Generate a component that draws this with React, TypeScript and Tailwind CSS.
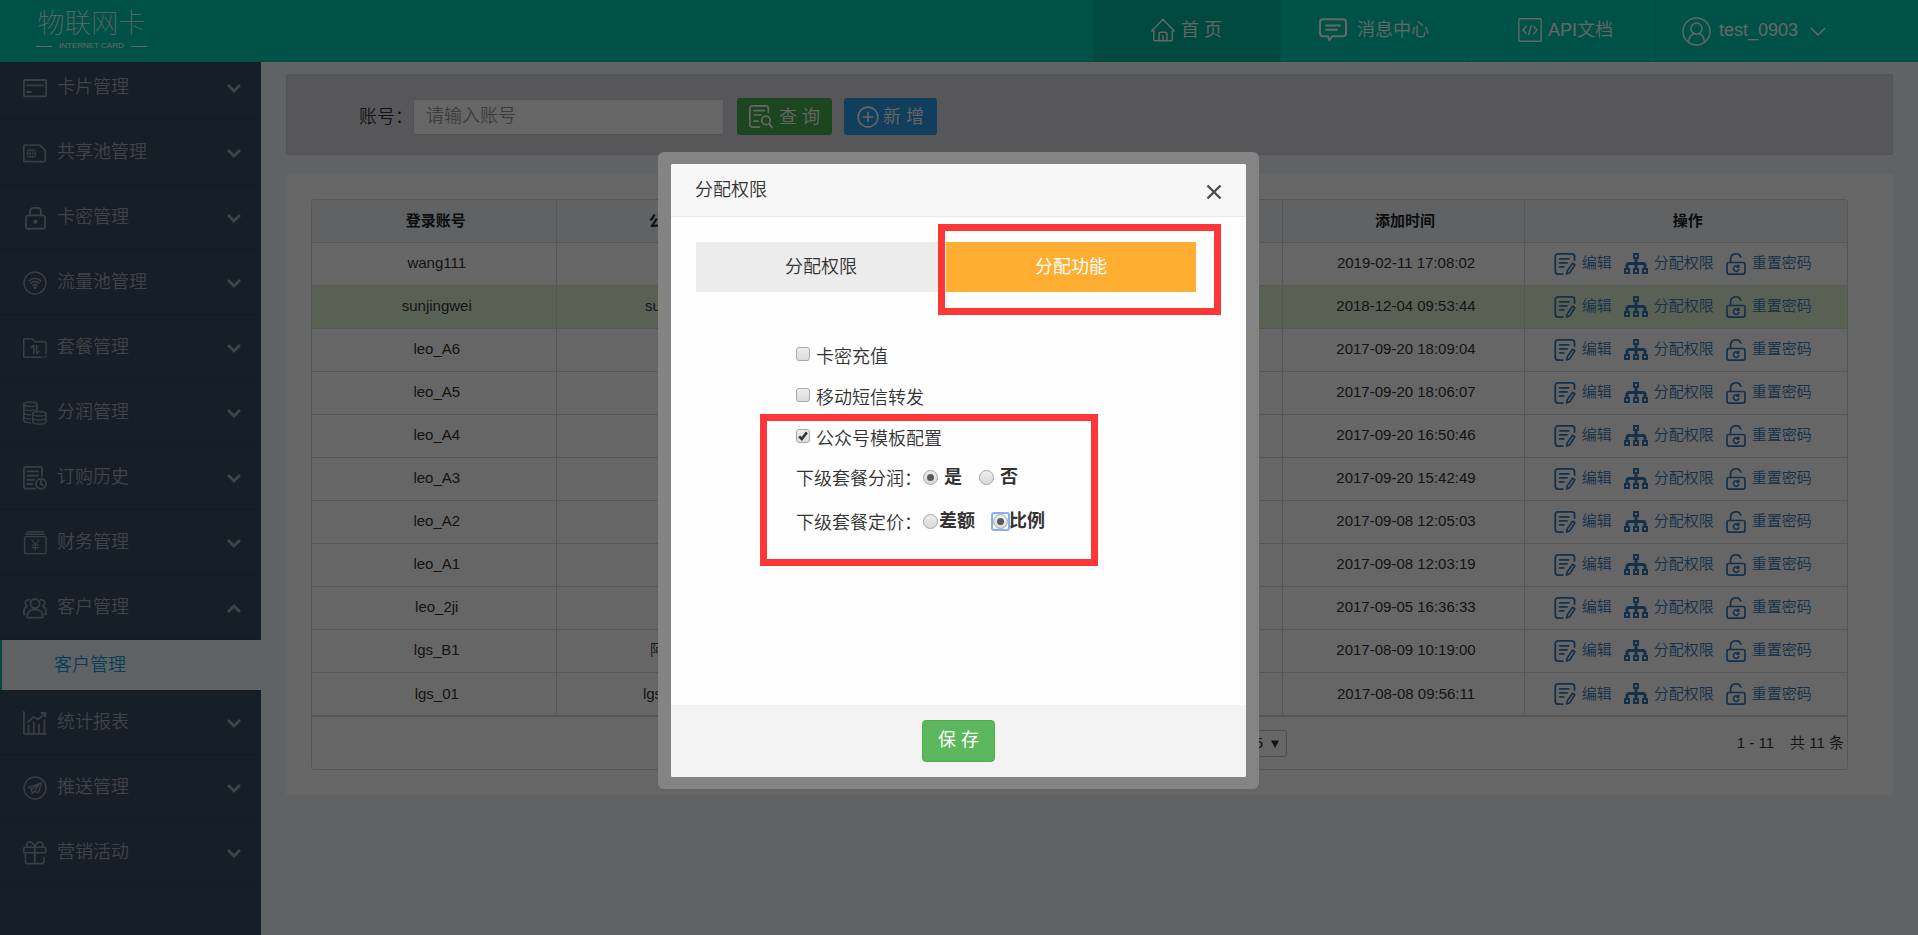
import React, { useState } from "react";

type IconProps = { className?: string };

function Svg({ className, children, width = 1.5 }: { className?: string; children: React.ReactNode; width?: number }) {
  return (
    <svg
      viewBox="0 0 24 24"
      fill="none"
      stroke="currentColor"
      strokeWidth={width}
      strokeLinecap="round"
      strokeLinejoin="round"
      className={className}
      aria-hidden="true"
    >
      {children}
    </svg>
  );
}

const CardIcon = ({ className }: IconProps) => (
  <Svg className={className} width={1.8}>
    <rect x="0.9" y="4" width="22.2" height="16.4" rx="1" />
    <path d="M4 9.4h16M4 16h4" />
  </Svg>
);

const SimIcon = ({ className }: IconProps) => (
  <Svg className={className} width={1.7}>
    <path d="M1.8 4h15l5.4 5.4v10.2a1 1 0 0 1-1 1H1.8a1 1 0 0 1-1-1V5a1 1 0 0 1 1-1Z" />
    <rect x="4.4" y="9" width="8" height="7" rx="1" strokeWidth="1" />
    <path d="M7.2 9v7M9.8 9v7M4.4 12.5h2.8M9.8 12.5h2.6" strokeWidth="1" />
  </Svg>
);

const LockIcon = ({ className }: IconProps) => (
  <Svg className={className} width={1.9}>
    <rect x="3" y="9.4" width="19" height="13.4" rx="2.4" />
    <path d="M7 9.2V5.4A3.4 3.4 0 0 1 10.4 2h4.2A3.4 3.4 0 0 1 18 5.400v3.8" />
    <circle cx="12.5" cy="15.8" r="1.2" fill="currentColor" />
  </Svg>
);

const WifiIcon = ({ className }: IconProps) => (
  <Svg className={className} width={1.4}>
    <circle cx="12" cy="12" r="11" />
    <path d="M6.3 9.8c3.400-3 8-3 11.400 0M8.100 12.200c2.400-2 5.400-2 7.800 0M9.900 14.400c1.400-1 2.800-1 4.200 0" strokeWidth="1.6" />
    <circle cx="12" cy="16.6" r="0.9" fill="currentColor" />
  </Svg>
);

const FolderIcon = ({ className }: IconProps) => (
  <Svg className={className} width={1.5}>
    <path d="M18.5 21.3H1.700a1 1 0 0 1-1-1V3.800a1 1 0 0 1 1-1h7.400l3 3h10a1 1 0 0 1 1 1v10.400" />
    <path d="M8.200 11.600l2.600-2.200v8M13.600 9.400v8l2.600-2.200" />
    <path d="M20.600 21.300h.6M23 20v.6" />
  </Svg>
);

const CoinsIcon = ({ className }: IconProps) => (
  <Svg className={className} width={1.5}>
    <ellipse cx="7.4" cy="3.2" rx="6.6" ry="2.3" />
    <path d="M.8 3.200v16.400c0 1.200 3 2.200 6.600 2.200M14 3.200v6.600M.8 7.300c0 1.300 3 2.300 6.600 2.300s6.600-1 6.600-2.300M.8 11.400c0 1.300 3 2.300 6.600 2.300M.8 15.500c0 1.300 3 2.300 6.600 2.300" />
    <ellipse cx="16.3" cy="12.8" rx="6.6" ry="2.3" />
    <path d="M9.700 12.800v8c0 1.300 3 2.300 6.600 2.300s6.600-1 6.600-2.300v-8M9.700 16.800c0 1.300 3 2.300 6.600 2.300s6.600-1 6.600-2.300" />
  </Svg>
);

const HistoryIcon = ({ className }: IconProps) => (
  <Svg className={className} width={1.8}>
    <path d="M12 22.600H2.900a2 2 0 0 1-2-2V2.900a2 2 0 0 1 2-2h14a2 2 0 0 1 2 2v7.400" />
    <path d="M4.400 5.400h10.800M4.400 9.600h10.800M4.400 13.800h6.600M4.400 18h4.800" />
    <circle cx="18" cy="17.8" r="5" />
    <path d="M17.800 15v3l2 1.200" />
  </Svg>
);

const FinanceIcon = ({ className }: IconProps) => (
  <Svg className={className} width={1.4}>
    <rect x="1.6" y="5.6" width="21.4" height="17" rx="1" />
    <path d="M2.800 3.200h19M4.200.8h16.200" />
    <path d="M9 9.200l3.400 4.200 3.400-4.200M12.400 13.400v6.200M9.200 14h6.400M9.200 16.600h6.400" strokeWidth="1.1" />
  </Svg>
);

const UsersIcon = ({ className }: IconProps) => (
  <Svg className={className} width={1.8}>
    <circle cx="12" cy="7.6" r="4.6" />
    <path d="M4.200 21.400c-.6-4.400 2.400-8 7.800-8s8.400 3.600 7.800 8c0 .4-15.600.4-15.600 0Z" />
    <path d="M6.200 3.600C3.400 3.400 2 5.600 2.600 8c.3 1 .8 1.600 1.400 2.200C1.400 11.600.6 14.600.9 18.200h1M17.800 3.600c2.800-.2 4.200 2 3.600 4.400-.3 1-.8 1.600-1.400 2.200 2.600 1.400 3.400 4.400 3.100 8h-1" />
  </Svg>
);

const ChartIcon = ({ className }: IconProps) => (
  <Svg className={className} width={1.8}>
    <path d="M.9.9v21.900h22.200M5.600 22v-7.600M10.800 22V11.400M16 22v-8.600M21.400 22V9.400" />
    <path d="M5 11.200l5.200-5.400 5 2.600 7-6M18.600 2h3.800v3.400" />
  </Svg>
);

const PlaneIcon = ({ className }: IconProps) => (
  <Svg className={className} width={1.4}>
    <circle cx="12" cy="12" r="11" />
    <path d="M18.500 6.800L5.500 11.400l3 1.800.8 4.400 2.200-2.400 3.800 1.600 3.200-10ZM8.500 13.200l7.200-4.400-4.200 6.400" />
  </Svg>
);

const GiftIcon = ({ className }: IconProps) => (
  <Svg className={className} width={1.6}>
    <rect x="0.8" y="6.2" width="22" height="5.6" rx="1.4" />
    <path d="M2.400 12v8.600a2 2 0 0 0 2 2H19a2 2 0 0 0 2-2v-4M11.800 6.200v16.200M11.800 6C10.200 2 7.800.6 5.800 1S3.200 4 4 6M11.800 6c1.600-4 4-5.400 6-5s2.600 3 1.800 5" />
  </Svg>
);

const HomeIcon = ({ className }: IconProps) => (
  <Svg className={className} width={1.4}>
    <path d="M2.800 13H.8L12 1.200 23.200 13h-2v8.800a1 1 0 0 1-1 1H3.800a1 1 0 0 1-1-1V13Z" />
    <path d="M8 22.600v-6.400a2 2 0 0 1 2-2h4a2 2 0 0 1 2 2v6.400M12 18v4.600" />
  </Svg>
);

const MessageIcon = ({ className }: IconProps) => (
  <svg viewBox="0 0 28 24" fill="none" stroke="currentColor" strokeWidth="2" strokeLinecap="round" strokeLinejoin="round" className={className} aria-hidden="true">
    <path d="M4 1.200h20a3 3 0 0 1 3 3v11a3 3 0 0 1-3 3H13l-2.600 4-1.600-4H4a3 3 0 0 1-3-3v-11a3 3 0 0 1 3-3Z" />
    <path d="M7 7.400h14M7 11.800h11" />
  </svg>
);

const ApiIcon = ({ className }: IconProps) => (
  <Svg className={className} width={1.4}>
    <rect x="0.8" y="0.8" width="22.4" height="22.4" rx="1" />
    <path d="M8.200 8.400L5 12l3.200 3.600M15.800 8.400L19 12l-3.200 3.600M13.200 7.600l-2.400 8.800" />
  </Svg>
);

const AvatarIcon = ({ className }: IconProps) => (
  <Svg className={className} width={1.2}>
    <circle cx="12" cy="12" r="11.2" />
    <circle cx="12" cy="9.6" r="4.6" />
    <path d="M5.400 20.600c.4-4 2.600-6.400 4.600-7M18.600 20.600c-.4-4-2.600-6.400-4.600-7" />
  </Svg>
);

const QueryIcon = ({ className }: IconProps) => (
  <Svg className={className} width={1.7}>
    <path d="M10.400 22.200H3.200a2.400 2.400 0 0 1-2.400-2.400V3.200A2.400 2.400 0 0 1 3.200.8H17a2.400 2.400 0 0 1 2.400 2.400v4" />
    <path d="M5 5.600h10.400M5 10h7M5 16.200h4" />
    <circle cx="17" cy="15.4" r="4.2" />
    <path d="M20 18.600l3.200 4" />
  </Svg>
);

const PlusIcon = ({ className }: IconProps) => (
  <Svg className={className} width={1.7}>
    <circle cx="12" cy="12" r="10.8" />
    <path d="M12 7v10M7 12h10" />
  </Svg>
);

const EditIcon = ({ className }: IconProps) => (
  <Svg className={className} width={2}>
    <path d="M9.600 23H4.400a3 3 0 0 1-3-3V4a3 3 0 0 1 3-3h15a3 3 0 0 1 3 3v3.600" />
    <path d="M6.200 6.400h10M6.200 10.800h8M6.200 15.200h4.400" />
    <path d="M20.200 11.200l2.600 1.600-5.600 8.800-3.400 1.400.6-3.400 5.800-8.400Z" strokeWidth="1.8" />
  </Svg>
);

const TreeIcon = ({ className }: IconProps) => (
  <svg viewBox="0 0 24 21" fill="none" stroke="currentColor" strokeWidth="2" className={className} aria-hidden="true">
    <rect x="10" y="1" width="4" height="4" />
    <rect x="1" y="16" width="4" height="4" />
    <rect x="10" y="16" width="4" height="4" />
    <rect x="19" y="16" width="4" height="4" />
    <path d="M12 5v11M3 16v-3.500a2 2 0 0 1 2-2h14a2 2 0 0 1 2 2V16" strokeWidth="3" />
  </svg>
);

const UnlockIcon = ({ className }: IconProps) => (
  <svg viewBox="0 0 20 22" fill="none" stroke="currentColor" strokeWidth="1.7" strokeLinecap="round" strokeLinejoin="round" className={className} aria-hidden="true">
    <rect x="1" y="9.5" width="18" height="11.6" rx="2" />
    <path d="M4.600 9.300V6.200a5.300 5.300 0 0 1 10.200-2.200" />
    <path d="M12.400 13.800a2.800 2.800 0 1 0 .4 2.800M12.800 12.400v1.800H11" strokeWidth="1.6" />
  </svg>
);

const Chevron = ({ up = false }: { up?: boolean }) => (
  <svg viewBox="0 0 14 9" fill="none" stroke="currentColor" strokeWidth="2.8" className="h-[9px] w-[14px]" aria-hidden="true">
    <path d={up ? "M1 8l6-6 6 6" : "M1 1l6 6 6-6"} />
  </svg>
);

const menu = [
  { label: "卡片管理", Icon: CardIcon },
  { label: "共享池管理", Icon: SimIcon },
  { label: "卡密管理", Icon: LockIcon },
  { label: "流量池管理", Icon: WifiIcon },
  { label: "套餐管理", Icon: FolderIcon },
  { label: "分润管理", Icon: CoinsIcon },
  { label: "订购历史", Icon: HistoryIcon },
  { label: "财务管理", Icon: FinanceIcon },
  { label: "客户管理", Icon: UsersIcon, children: ["客户管理"] },
  { label: "统计报表", Icon: ChartIcon },
  { label: "推送管理", Icon: PlaneIcon },
  { label: "营销活动", Icon: GiftIcon },
];

const rows = [
  { account: "wang111", company: "", time: "2019-02-11 17:08:02" },
  { account: "sunjingwei", company: "sunjingwei", time: "2018-12-04 09:53:44" },
  { account: "leo_A6", company: "", time: "2017-09-20 18:09:04" },
  { account: "leo_A5", company: "", time: "2017-09-20 18:06:07" },
  { account: "leo_A4", company: "", time: "2017-09-20 16:50:46" },
  { account: "leo_A3", company: "", time: "2017-09-20 15:42:49" },
  { account: "leo_A2", company: "", time: "2017-09-08 12:05:03" },
  { account: "leo_A1", company: "", time: "2017-09-08 12:03:19" },
  { account: "leo_2ji", company: "", time: "2017-09-05 16:36:33" },
  { account: "lgs_B1", company: "阿里公司", time: "2017-08-09 10:19:00" },
  { account: "lgs_01", company: "lgs_01公司", time: "2017-08-08 09:56:11" },
];

function Header() {
  return (
    <header className="flex h-[62px] shrink-0 bg-[#00cdae] text-lg text-white">
      <div className="flex flex-1 flex-col items-start pl-9 pt-2">
        <div className="flex flex-col items-center">
          <span className="text-[27px] leading-8 font-thin">物联网卡</span>
          <span className="flex items-center gap-[7px] text-[8px] leading-3">
            <span className="h-px w-4 bg-white" />
            INTERNET CARD
            <span className="h-px w-4 bg-white" />
          </span>
        </div>
      </div>
      <nav className="flex">
        <a href="#home" className="flex w-[187px] items-center justify-center gap-1.5 bg-[#00b79c] pb-0.5">
          <HomeIcon className="size-6" />
          首 页
        </a>
        <a href="#message" className="flex w-[187px] items-center justify-center gap-2.5 border-l border-[#00c3a5] pb-0.5">
          <MessageIcon className="h-6 w-7" />
          消息中心
        </a>
        <a href="#api" className="flex w-[188px] items-center justify-center gap-1.5 border-l border-[#00c3a5] pb-0.5 pl-2">
          <ApiIcon className="size-6" />
          API文档
        </a>
        <button type="button" className="flex w-[263px] items-center border-l border-[#00c3a5] pl-[26px]">
          <AvatarIcon className="size-[29px]" />
          <span className="ml-2 pb-0.5">test_0903</span>
          <svg viewBox="0 0 16 9" fill="none" stroke="currentColor" strokeWidth="1.5" className="ml-3 h-[9px] w-4" aria-hidden="true">
            <path d="M1 1l7 7 7-7" />
          </svg>
        </button>
      </nav>
    </header>
  );
}

function Sidebar() {
  return (
    <aside className="w-[261px] shrink-0 overflow-hidden bg-[#374b61] text-lg text-[#a0a8b2]">
      <ul className="-mt-[7px]">
        {menu.map(({ label, Icon, children }) => (
          <li key={label}>
            <button type="button" className="flex h-[65px] w-full items-center border-b border-[#32455a] pl-[23px] pr-5">
              <Icon className="mt-0.5 size-6 text-[#8f9baa]" />
              <span className="ml-2.5 flex-1 text-left">{label}</span>
              <span className="mt-0.5">
                <Chevron up={Boolean(children)} />
              </span>
            </button>
            {children?.map((child) => (
              <a key={child} href="#customers" className="flex h-[50px] items-center border-l-2 border-[#00b99c] bg-[#f3f5f8] pl-[52px] text-[#0b9be0]">
                {child}
              </a>
            ))}
          </li>
        ))}
      </ul>
    </aside>
  );
}

function SearchBar() {
  return (
    <form className="flex h-[81px] items-center rounded-[3px] border border-[#cfcfd4] bg-[#dadade] pl-[72px] pt-1 text-lg" onSubmit={(e) => e.preventDefault()}>
      <label htmlFor="account" className="text-[#333]">账号：</label>
      <input
        id="account"
        type="text"
        placeholder="请输入账号"
        className="h-9 w-[311px] rounded-xs border border-[#ccc] bg-white px-3 placeholder:text-[#999]"
      />
      <button type="submit" className="ml-[13px] flex h-[37px] w-[95px] items-center justify-center gap-1.5 rounded-[3px] bg-[#45b04f] text-white">
        <QueryIcon className="size-6" />
        查 询
      </button>
      <button type="button" className="ml-3 flex h-[37px] w-[93px] items-center justify-center gap-1 rounded-[3px] bg-[#2e9cea] text-white">
        <PlusIcon className="size-[22px]" />
        新 增
      </button>
    </form>
  );
}

function CustomerTable() {
  return (
    <section className="mt-[19px] bg-white pb-[25px] pl-[25px] pr-[45px] pt-[25px] text-[15px] text-[#333]">
      <div className="overflow-hidden rounded-[3px] border border-[#d8d8d8]">
        <table className="w-full table-fixed border-collapse text-center">
          <colgroup>
            <col className="w-[244px]" />
            <col className="w-[248px]" />
            <col />
            <col className="w-[242px]" />
            <col className="w-[323px]" />
          </colgroup>
          <thead>
            <tr className="h-[42px] bg-[#f0f4f8] text-[#222] [&>th]:pl-1 [&>th+th]:border-l [&>th+th]:border-[#d8d8d8]">
              <th>登录账号</th>
              <th className="pr-1.5">公司名称</th>
              <th aria-hidden="true" />
              <th>添加时间</th>
              <th>操作</th>
            </tr>
          </thead>
          <tbody>
            {rows.map((row, i) => (
              <tr
                key={row.account}
                className={
                  i === 1
                    ? "h-[43px] border-t border-[#d8d8d8] bg-[#dff2d5] [&>td+td]:border-l [&>td+td]:border-[#d8d8d8]"
                    : "h-[43px] border-t border-[#d8d8d8] [&>td+td]:border-l [&>td+td]:border-[#d8d8d8]"
                }
              >
                <td className="pl-1.5">{row.account}</td>
                <td>{row.company}</td>
                <td />
                <td className="pl-1.5">{row.time}</td>
                <td className="pr-1.5">
                  <div className="flex items-center justify-center gap-3 text-[#337ab7]">
                    <a href="#edit" className="flex items-center gap-1.5">
                      <EditIcon className="size-[22px]" />
                      编辑
                    </a>
                    <a href="#assign" className="flex items-center gap-1.5">
                      <TreeIcon className="h-[21px] w-6" />
                      分配权限
                    </a>
                    <a href="#reset" className="flex items-center gap-1.5">
                      <UnlockIcon className="h-[22px] w-5" />
                      重置密码
                    </a>
                  </div>
                </td>
              </tr>
            ))}
          </tbody>
        </table>
        <div className="grid h-[54px] grid-cols-[976fr_560fr] items-center border-t-2 border-[#d8d8d8]">
          <div className="relative justify-self-end">
            <select aria-label="每页条数" defaultValue="15" className="h-[27px] w-[52px] appearance-none rounded-[3px] border border-[#c4c4c4] bg-white pl-2.5 text-[15px]">
              <option>15</option>
            </select>
            <svg viewBox="0 0 8 8" className="pointer-events-none absolute right-2 top-[10px] size-2 fill-[#333]" aria-hidden="true">
              <path d="M0 .5h8L4 8z" />
            </svg>
          </div>
          <div className="flex justify-end gap-4 pr-[3px]">
            <span>1 - 11</span>
            <span>共 11 条</span>
          </div>
        </div>
      </div>
    </section>
  );
}

function Check({ label, checked, onChange }: { label: string; checked: boolean; onChange: () => void }) {
  return (
    <label className="flex h-[41px] items-center gap-1.5">
      <span className="mb-1.5 grid size-3.5">
        <input
          type="checkbox"
          checked={checked}
          onChange={onChange}
          className="col-start-1 row-start-1 size-3.5 appearance-none rounded-[3px] border border-[#a8a8a8] bg-linear-to-b from-[#ededed] to-[#dcdcdc]"
        />
        {checked && (
          <svg viewBox="0 0 14 14" fill="none" stroke="#333" strokeWidth="2.6" className="pointer-events-none col-start-1 row-start-1 size-3.5" aria-hidden="true">
            <path d="M3.200 7.400l2.600 2.600 5-6.600" />
          </svg>
        )}
      </span>
      {label}
    </label>
  );
}

type RadioProps = { name: string; label: string; checked: boolean; onChange: () => void; spaced?: boolean; focused?: boolean };

function Radio({ name, label, checked, onChange, spaced, focused }: RadioProps) {
  return (
    <label className={spaced ? "flex items-center gap-1.5 font-bold" : "flex items-center gap-px font-bold"}>
      <span className={focused ? "grid size-[15px] rounded-[1px] outline-2 outline-[#84b0f8]" : "grid size-[15px]"}>
        <input
          type="radio"
          name={name}
          checked={checked}
          onChange={onChange}
          className="col-start-1 row-start-1 size-[15px] appearance-none rounded-full border border-[#a4a4a4] bg-linear-to-b from-[#ededed] to-[#d9d9d9] outline-none"
        />
        {checked && <span className="pointer-events-none col-start-1 row-start-1 size-[7px] place-self-center rounded-full bg-[#5a5a5a]" />}
      </span>
      {label}
    </label>
  );
}

function PermissionDialog() {
  const [checks, setChecks] = useState([false, false, true]);
  const [share, setShare] = useState("是");
  const [pricing, setPricing] = useState("比例");
  const toggle = (i: number) => setChecks(checks.map((c, j) => (j === i ? !c : c)));

  return (
    <div className="fixed inset-0 flex items-start justify-center bg-black/60 pr-px pt-[152px] text-lg text-[#333]">
      <div role="dialog" aria-labelledby="dialog-title" className="relative w-[601px] rounded-md bg-[#848484] px-[13px] py-3">
        <div className="overflow-hidden rounded-xs bg-[#fefefe]">
          <div className="flex h-[53px] items-center justify-between border-b border-[#e8e8e8] bg-[#f7f7f7] pl-6 pr-6">
            <h2 id="dialog-title">分配权限</h2>
            <button type="button" aria-label="关闭" className="pt-1 text-[#4b4b58]">
              <svg viewBox="0 0 16 16" fill="none" stroke="currentColor" strokeWidth="2.4" className="size-4" aria-hidden="true">
                <path d="M1.500 1.500l13 13M14.500 1.500l-13 13" />
              </svg>
            </button>
          </div>
          <div className="h-[488px] pl-[25px] pr-[50px] pt-[25px]">
            <div role="tablist" className="grid grid-cols-2">
              <button type="button" role="tab" aria-selected="false" className="h-[50px] bg-[#ececec]">分配权限</button>
              <button type="button" role="tab" aria-selected="true" className="h-[50px] bg-[#ffae31] font-normal text-white">分配功能</button>
            </div>
            <div className="pl-[100px] pt-11">
              <Check label="卡密充值" checked={checks[0]} onChange={() => toggle(0)} />
              <Check label="移动短信转发" checked={checks[1]} onChange={() => toggle(1)} />
              <Check label="公众号模板配置" checked={checks[2]} onChange={() => toggle(2)} />
              <div className="flex h-10 items-center">
                <span>下级套餐分润：</span>
                <div className="flex gap-[17px] pb-1 pl-px">
                  <Radio name="share" label="是" spaced checked={share === "是"} onChange={() => setShare("是")} />
                  <Radio name="share" label="否" spaced checked={share === "否"} onChange={() => setShare("否")} />
                </div>
              </div>
              <div className="flex h-12 items-center">
                <span>下级套餐定价：</span>
                <div className="flex gap-[18px] pb-1 pl-px">
                  <Radio name="pricing" label="差额" checked={pricing === "差额"} onChange={() => setPricing("差额")} />
                  <Radio name="pricing" label="比例" focused checked={pricing === "比例"} onChange={() => setPricing("比例")} />
                </div>
              </div>
            </div>
          </div>
          <div className="flex h-[72px] items-center justify-center bg-[#f3f3f3]">
            <button type="button" className="h-[42px] w-[73px] rounded-[4px] border border-[#4cae4c] bg-[#5cb85c] pb-0.5 font-normal text-white">保 存</button>
          </div>
        </div>
        <div className="pointer-events-none absolute left-[280px] top-[72px] h-[91px] w-[283px] border-7 border-[#fd3737]" />
        <div className="pointer-events-none absolute left-[102px] top-[262px] h-[152px] w-[338px] border-7 border-[#fd3737]" />
      </div>
    </div>
  );
}

export default function App() {
  return (
    <div className="flex h-screen flex-col overflow-hidden bg-[#f0f4f8] font-['Liberation_Sans','Noto_Sans_CJK_SC',sans-serif] font-[350]">
      <Header />
      <div className="flex min-h-0 flex-1">
        <Sidebar />
        <main className="min-w-0 flex-1 px-[25px] pt-3">
          <SearchBar />
          <CustomerTable />
        </main>
      </div>
      <PermissionDialog />
    </div>
  );
}
